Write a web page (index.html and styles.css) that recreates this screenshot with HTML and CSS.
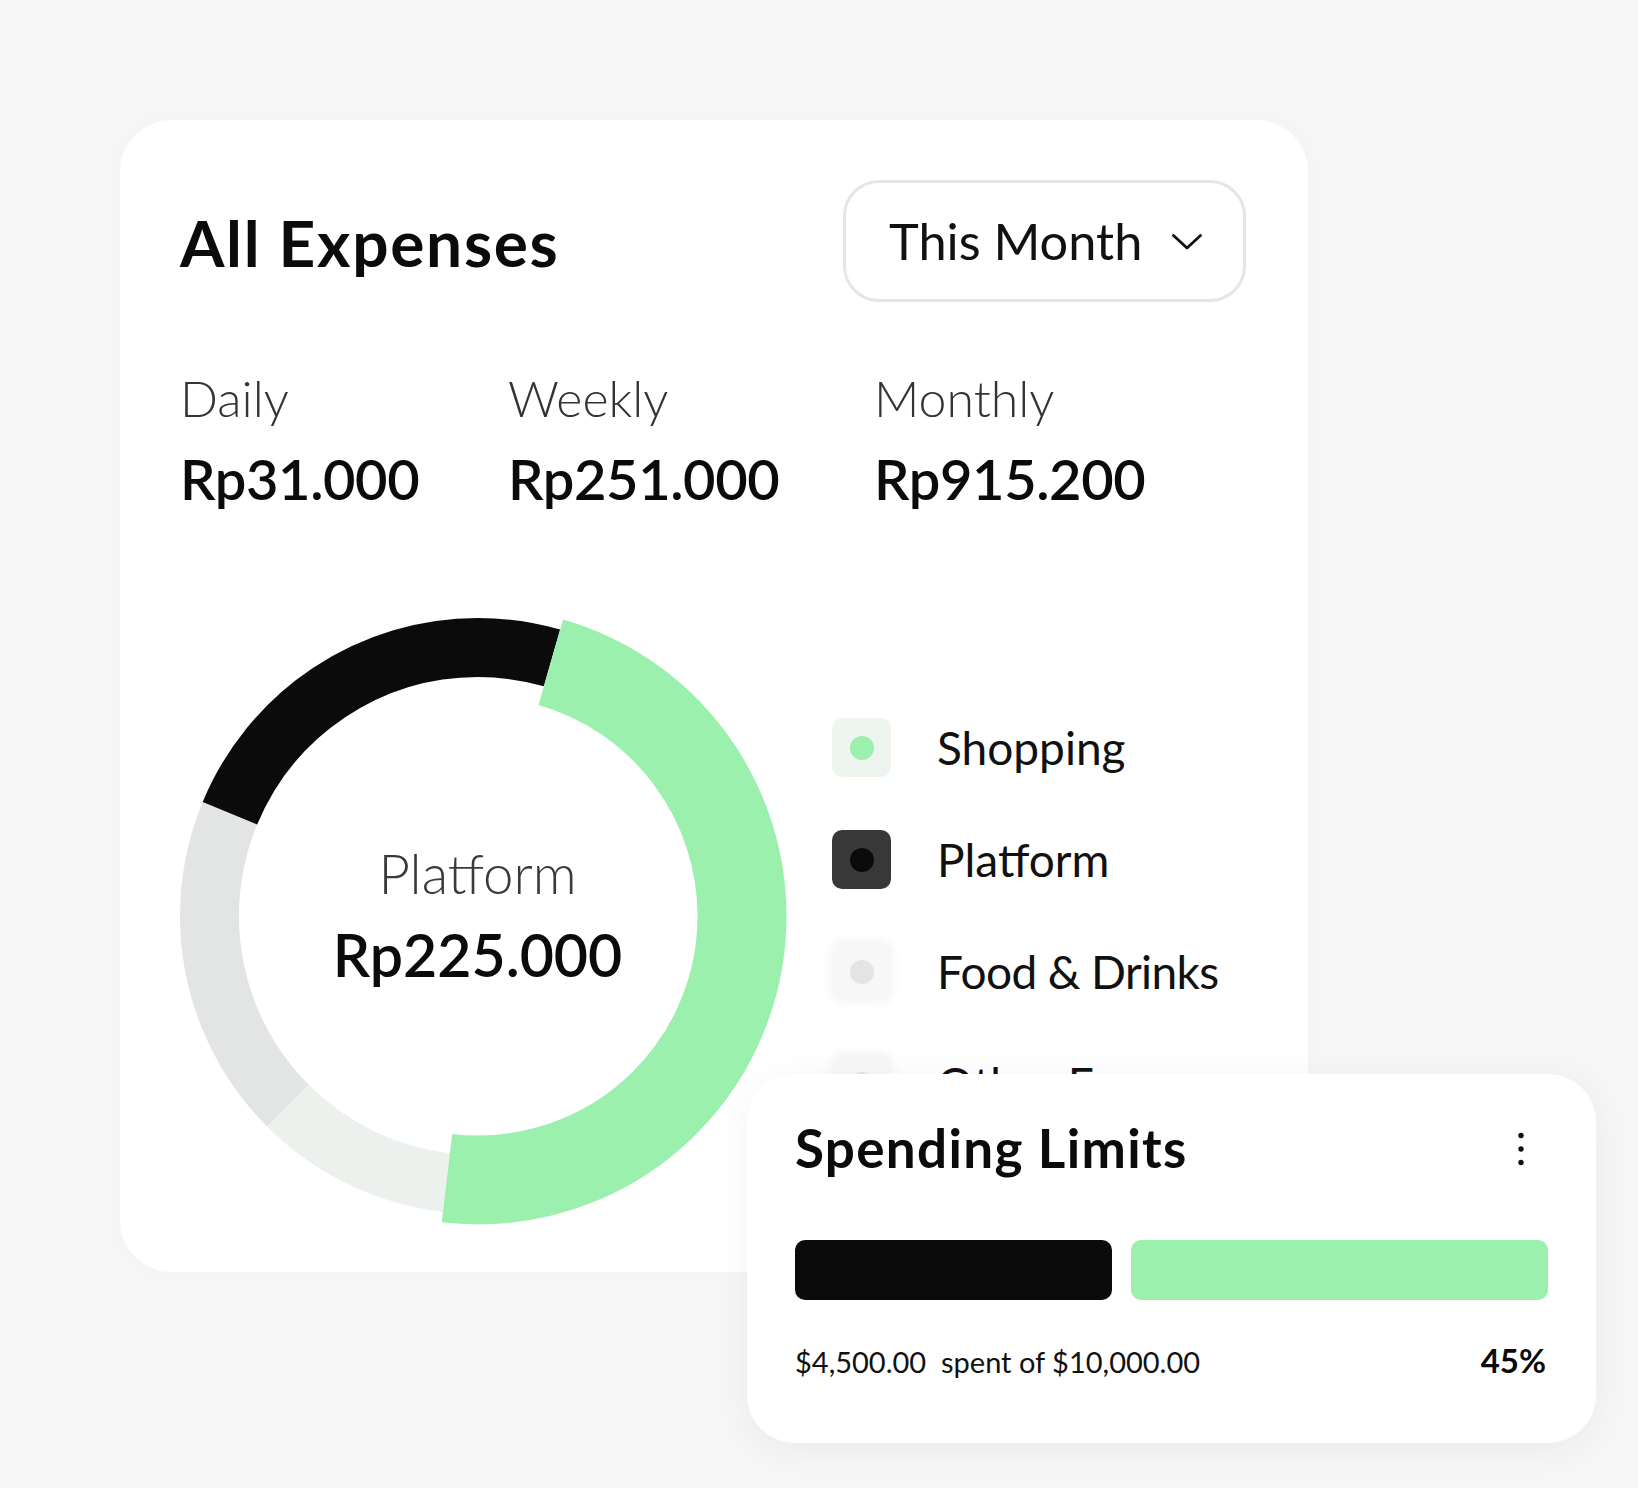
FILE: index.html
```html
<!DOCTYPE html>
<html lang="en">
<head>
<meta charset="utf-8">
<title>All Expenses</title>
<link rel="stylesheet" href="styles.css">
</head>
<body>
<div class="stage">
  <section class="card expenses">
    <header class="exp-head">
      <h1 class="exp-title">All Expenses</h1>
      <button class="period">
        <span class="period-label">This Month</span>
        <svg class="chev" width="30" height="16" viewBox="0 0 30 16"><polyline points="1.5,1.5 15,14 28.5,1.5" fill="none" stroke="#111" stroke-width="2.8" stroke-linecap="round" stroke-linejoin="round"/></svg>
      </button>
    </header>

    <div class="stats">
      <div class="stat s1"><div class="stat-label">Daily</div><div class="stat-value">Rp31.000</div></div>
      <div class="stat s2"><div class="stat-label">Weekly</div><div class="stat-value">Rp251.000</div></div>
      <div class="stat s3"><div class="stat-label">Monthly</div><div class="stat-value">Rp915.200</div></div>
    </div>

    <div class="chart-row">
      <div class="donut">
        <svg class="donut-svg" width="620" height="620" viewBox="-310 -310 620 620">
          <g transform="rotate(-90)">
            <circle r="268.5" fill="none" stroke="#edf1ed" stroke-width="59" stroke-dasharray="179.5 1507.54" stroke-dashoffset="-874.9"/>
            <circle r="268.5" fill="none" stroke="#e3e5e4" stroke-width="59" stroke-dasharray="315.85 1371.19" stroke-dashoffset="-1054.4"/>
            <circle r="268.5" fill="none" stroke="#0b0b0b" stroke-width="59" stroke-dasharray="391.77 1295.27" stroke-dashoffset="-1370.2"/>
            <circle r="264" fill="none" stroke="#9bf0ae" stroke-width="89" stroke-dasharray="786.53 872.23" stroke-dashoffset="-73.72"/>
          </g>
        </svg>
        <div class="donut-center">
          <div class="dc-label">Platform</div>
          <div class="dc-value">Rp225.000</div>
        </div>
      </div>

      <ul class="legend">
        <li class="lg-item"><span class="lg-icon ic-shop"><span class="lg-dot"></span></span><span class="lg-text">Shopping</span></li>
        <li class="lg-item"><span class="lg-icon ic-plat"><span class="lg-dot"></span></span><span class="lg-text">Platform</span></li>
        <li class="lg-item"><span class="lg-icon ic-food"><span class="lg-dot"></span></span><span class="lg-text">Food &amp; Drinks</span></li>
        <li class="lg-item"><span class="lg-icon ic-other"><span class="lg-dot"></span></span><span class="lg-text">Other Expenses</span></li>
      </ul>
    </div>
  </section>

  <section class="card limits">
    <div class="lim-head">
      <h2 class="lim-title">Spending Limits</h2>
      <svg class="kebab" width="6" height="34" viewBox="0 0 6 34"><circle cx="3" cy="3.5" r="2.7" fill="#111"/><circle cx="3" cy="17" r="2.7" fill="#111"/><circle cx="3" cy="30.5" r="2.7" fill="#111"/></svg>
    </div>
    <div class="bars">
      <div class="bar bar-spent" style="flex-basis: 317px"></div>
      <div class="bar bar-left" style="flex-basis: 417px"></div>
    </div>
    <div class="lim-foot">
      <span class="lim-text">$4,500.00&nbsp; spent of $10,000.00</span>
      <span class="lim-pct">45%</span>
    </div>
  </section>
</div>
</body>
</html>
```

FILE: styles.css
```css
* { box-sizing: border-box; }
html, body { margin: 0; padding: 0; }
body {
  background: #f6f6f6;
  font-family: Lato, "Noto Sans", sans-serif;
  color: #0b0b0b;
}
.stage {
  position: relative;
  width: 1638px;
  height: 1488px;
  padding: 120px 0 0 120px;
  overflow: hidden;
}
.card {
  background: #ffffff;
}
.expenses {
  width: 1188px;
  height: 1152px;
  border-radius: 52px;
  padding: 60px 62px 0 60px;
  box-shadow: 0 0 24px rgba(0, 0, 0, 0.015);
  overflow: hidden;
}
.exp-head {
  display: flex;
  justify-content: space-between;
  align-items: center;
  height: 122px;
}
.exp-title {
  margin: 4px 0 0 0;
  font-size: 64px;
  line-height: 1;
  font-weight: 700;
  letter-spacing: 1.7px;
}
.period {
  width: 403px;
  height: 122px;
  border: 3px solid #e6e6e6;
  border-radius: 36px;
  background: #fff;
  display: flex;
  align-items: center;
  justify-content: space-between;
  padding: 0 41px 0 43px;
  font-family: inherit;
  cursor: pointer;
}
.period-label {
  font-size: 50.5px;
  line-height: 1;
  font-weight: 400;
  color: #111;
}
.chev { display: block; margin-top: 2px; }

.stats {
  display: grid;
  grid-template-columns: 328px 366px auto;
  margin-top: 71px;
}
.stat-label {
  font-size: 50px;
  line-height: 1;
  font-weight: 300;
  color: #333;
}
.stat-value {
  margin-top: 28px;
  font-size: 56px;
  line-height: 1;
  font-weight: 600;
  letter-spacing: -0.4px;
  color: #0b0b0b;
}

.chart-row {
  display: flex;
  align-items: flex-start;
  margin-top: 99px;
  margin-left: -12.5px;
}
.donut {
  display: grid;
  width: 620px;
  height: 620px;
  flex: none;
}
.donut-svg, .donut-center {
  grid-area: 1 / 1;
}
.donut-svg { display: block; }
.donut-center {
  display: flex;
  flex-direction: column;
  align-items: center;
  justify-content: center;
  padding-bottom: 2px;
}
.dc-label {
  font-size: 54.5px;
  line-height: 1;
  font-weight: 300;
  color: #3a3a3a;
}
.dc-value {
  margin-top: 24px;
  font-size: 59px;
  line-height: 1;
  font-weight: 600;
  color: #0b0b0b;
}

.legend {
  list-style: none;
  margin: 112px 0 0 44.5px;
  padding: 0;
  display: flex;
  flex-direction: column;
  gap: 53px;
}
.lg-item {
  display: flex;
  align-items: center;
  gap: 46px;
  height: 59px;
}
.lg-icon {
  width: 59px;
  height: 59px;
  border-radius: 10px;
  display: flex;
  align-items: center;
  justify-content: center;
  flex: none;
}
.lg-dot {
  width: 24px;
  height: 24px;
  border-radius: 50%;
}
.ic-shop { background: #eef5ef; }
.ic-shop .lg-dot { background: #9bf0ae; }
.ic-plat { background: #383838; }
.ic-plat .lg-dot { background: #0b0b0b; }
.ic-food, .ic-other { background: #f7f7f7; box-shadow: 0 0 8px 4px #f9f9f9; }
.ic-food .lg-dot, .ic-other .lg-dot { background: #e3e5e4; }
.lg-text {
  font-size: 46px;
  line-height: 1;
  font-weight: 400;
  color: #111;
  white-space: nowrap;
}
.ic-food + .lg-text { letter-spacing: -0.6px; }

.limits {
  position: absolute;
  left: 747px;
  top: 1074px;
  width: 849px;
  height: 369px;
  border-radius: 48px;
  padding: 47px 48px 0 48px;
  box-shadow: 0 6px 36px rgba(0, 0, 0, 0.05);
}
.lim-head {
  display: flex;
  justify-content: space-between;
  align-items: center;
}
.lim-title {
  margin: 0;
  font-size: 53px;
  line-height: 1;
  font-weight: 700;
  letter-spacing: 1.3px;
  color: #0b0b0b;
}
.kebab { display: block; margin-right: 24px; margin-top: 2px; }
.bars {
  display: flex;
  gap: 19px;
  margin-top: 66px;
  height: 60px;
}
.bar {
  height: 60px;
  border-radius: 10px;
  flex-grow: 0;
  flex-shrink: 0;
}
.bar-spent { background: #0b0b0b; }
.bar-left { background: #9bf0ae; }
.lim-foot {
  display: flex;
  justify-content: space-between;
  align-items: baseline;
  margin-top: 44px;
}
.lim-text {
  font-size: 29px;
  line-height: 1;
  font-weight: 400;
  color: #111;
}
.lim-pct {
  font-size: 33px;
  line-height: 1;
  font-weight: 700;
  color: #0b0b0b;
  margin-right: 2px;
}
```
